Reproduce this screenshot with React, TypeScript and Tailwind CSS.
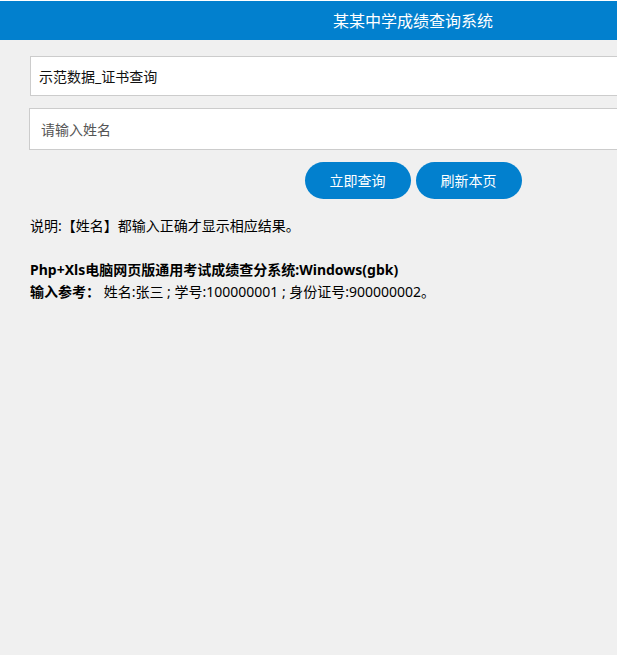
export default function App() {
  return (
    <div className="w-full min-h-[655px] overflow-hidden bg-[#f0f0f0] font-['Noto_Sans','Noto_Sans_CJK_SC',sans-serif]">
      <div className="w-[826px]">
        <div className="h-px bg-white" />
        <header className="h-[39px] bg-[#0280ce] flex items-center justify-center">
          <h1 className="text-[16px] text-white">某某中学成绩查询系统</h1>
        </header>

        <form className="flex flex-col px-[30px] pt-4">
          <input
            type="text"
            defaultValue="示范数据_证书查询"
            className="h-10 border border-[#cccccc] bg-white px-2 text-[14px] text-[#111] outline-none"
          />
          <input
            type="text"
            placeholder="请输入姓名"
            className="mt-3 -ml-px h-[42px] border border-[#cccccc] bg-white px-[11px] text-[14px] text-[#333] placeholder:text-[#555] outline-none"
          />
          <div className="mt-3 flex justify-center gap-[5px]">
            <button
              type="button"
              className="h-[37px] w-[106px] rounded-full bg-[#0280ce] text-[14px] text-white"
            >
              立即查询
            </button>
            <button
              type="button"
              className="h-[37px] w-[106px] rounded-full bg-[#0280ce] text-[14px] text-white"
            >
              刷新本页
            </button>
          </div>
        </form>

        <div className="px-[30px] pt-4 text-[14px] leading-[22px] text-black">
          <p>说明:【姓名】都输入正确才显示相应结果。</p>
          <p>&nbsp;</p>
          <p className="font-bold">Php+Xls电脑网页版通用考试成绩查分系统:Windows(gbk)</p>
          <p>
            <span className="font-bold">输入参考：</span> 姓名:张三 ; 学号:100000001 ; 身份证号:900000002。
          </p>
        </div>
      </div>
    </div>
  );
}
